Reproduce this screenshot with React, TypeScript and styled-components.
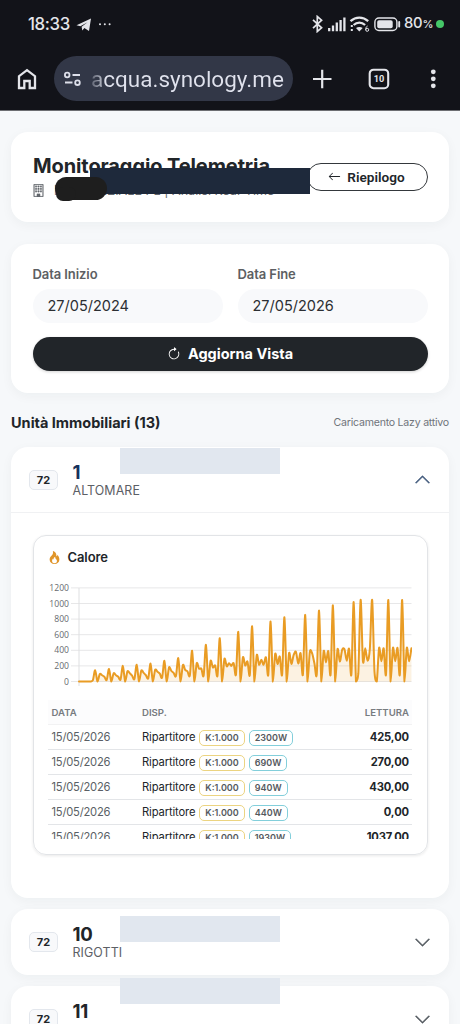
import React from 'react';
import styled, { createGlobalStyle } from 'styled-components';
import { BsArrowLeft, BsArrowClockwise, BsBuilding, BsChevronDown, BsChevronUp, BsFire } from 'react-icons/bs';

const GlobalStyle = createGlobalStyle`
  * { box-sizing: border-box; }
  body {
    margin: 0;
    background: #f6f8fa;
    color: #212529;
    font-family: Inter, "Liberation Sans", sans-serif;
  }
`;

const Screen = styled.div`
  width: 460px;
  height: 1024px;
  overflow: hidden;
`;

const PhoneHeader = styled.header`
  height: 111px;
  background: #121319;
  border-bottom: 1px solid #6d6e72;
  color: #e4e5ea;
`;

const StatusBar = styled.div`
  height: 47px;
  padding: 0 16px 0 28px;
  display: flex;
  align-items: center;
`;

const Clock = styled.span`
  width: 43px;
  font: 500 16.8px/20px Inter, sans-serif;
  letter-spacing: -0.35px;
  white-space: nowrap;
`;

const StatusIcons = styled.div`
  margin-left: auto;
  display: flex;
  align-items: center;
`;

const BatteryText = styled.span`
  width: 32px;
  margin-left: 3px;
  font: 500 14.8px/18px Inter, sans-serif;
  letter-spacing: -0.2px;
  white-space: nowrap;
  small { font-size: 11px; }
`;

const ActiveDot = styled.span`
  width: 8px;
  height: 8px;
  border-radius: 50%;
  background: #45c768;
`;

const BrowserBar = styled.div`
  height: 63px;
  padding: 9px 0 0 16px;
  display: flex;
  align-items: flex-start;
  svg { flex: none; }
`;

const IconSlot = styled.div<{ $width: number }>`
  width: ${p => p.$width}px;
  height: 45px;
  display: flex;
  align-items: center;
`;

const AddressPill = styled.div`
  width: 239px;
  height: 45px;
  padding-left: 9px;
  border-radius: 23px;
  background: #323747;
  display: flex;
  align-items: center;
`;

const Address = styled.span`
  margin-left: 9px;
  font: 400 22.5px/28px Roboto, sans-serif;
  white-space: nowrap;
  background: linear-gradient(90deg, #5d6170 0, #a0a4b1 9px, #e0e2ed 14px);
  background-clip: text;
  color: transparent;
`;

const Main = styled.main`
  padding: 21px 11px 0;
`;

const Card = styled.section<{ $height: number; $gap: number }>`
  height: ${p => p.$height}px;
  margin-bottom: ${p => p.$gap}px;
  border-radius: 17px;
  background: #fff;
  box-shadow: 0 3px 12px rgba(30, 35, 42, 0.045);
`;

const TitleCard = styled(Card)`
  position: relative;
  padding: 22px 22px 0;
  display: flex;
  justify-content: space-between;
`;

const Title = styled.h1`
  margin: 0;
  font-size: 20px;
  line-height: 24px;
  font-weight: 700;
  letter-spacing: -0.1px;
  white-space: nowrap;
`;

const Subtitle = styled.div`
  margin-top: 4px;
  display: flex;
  align-items: center;
  gap: 9px;
  color: #63686e;
  font-size: 12.6px;
  line-height: 17px;
  white-space: nowrap;
  svg { margin: -1px 0 0 -1px; stroke: currentColor; stroke-width: 0.3; }
`;

const BackButton = styled.button`
  position: absolute;
  right: 21px;
  top: 31px;
  width: 121px;
  height: 28px;
  padding: 0 2px 1px 0;
  border: 1px solid #34383c;
  border-radius: 14px;
  background: #fff;
  color: #212529;
  display: flex;
  align-items: center;
  justify-content: center;
  gap: 6px;
  font: 600 13.6px/16px Roboto, sans-serif;
`;

const TitleMask = styled.span`
  position: absolute;
  left: 79px;
  top: 36px;
  width: 220px;
  height: 26px;
  background: #1e293b;
`;

const InkMask = styled.span`
  position: absolute;
  left: 44px;
  top: 45px;
  width: 52px;
  height: 23px;
  border-radius: 12px;
  background: #1e1e1e;
  &::after {
    content: "";
    position: absolute;
    left: 1px;
    top: 10px;
    width: 20px;
    height: 14px;
    border-radius: 9px;
    background: inherit;
  }
`;

const FilterCard = styled(Card)`
  padding: 22px 21.5px 0;
`;

const DateGrid = styled.div`
  display: grid;
  grid-template-columns: 1fr 1fr;
  gap: 15px;
`;

const FieldLabel = styled.div`
  height: 23px;
  color: #5d5f63;
  font: 600 13px/17px Inter, sans-serif;
  letter-spacing: -0.08px;
`;

const DateField = styled.div`
  height: 34px;
  padding-left: 15px;
  border-radius: 17px;
  background: #f8f9fb;
  color: #2c2f33;
  font-size: 14.5px;
  line-height: 33px;
`;

const RefreshButton = styled.button`
  width: 100%;
  height: 34px;
  margin-top: 14px;
  padding: 0;
  border: 0;
  border-radius: 17px;
  background: #212529;
  box-shadow: 0 1px 3px rgba(0, 0, 0, 0.18);
  color: #fff;
  display: flex;
  align-items: center;
  justify-content: center;
  gap: 7px;
  font: 700 14.5px/20px Inter, sans-serif;
`;

const SectionHead = styled.div`
  height: 20px;
  margin-bottom: 15px;
  display: flex;
  align-items: center;
  justify-content: space-between;
`;

const SectionTitle = styled.h2`
  margin: 0;
  font-size: 14.5px;
  font-weight: 700;
`;

const SectionNote = styled.span`
  margin-top: 1px;
  color: #70747a;
  font-size: 10.6px;
  letter-spacing: -0.24px;
`;

const UnitHeader = styled.div<{ $open?: boolean }>`
  position: relative;
  height: 66px;
  padding: 0 18px;
  border-bottom: ${p => (p.$open ? '1px solid #f0f1f3' : '0')};
  display: flex;
  align-items: center;
  color: ${p => (p.$open ? '#16325c' : '#212529')};
  > svg {
    margin-left: auto;
    color: ${p => (p.$open ? '#40587b' : '#50565c')};
    stroke: currentColor;
    stroke-width: 0.5;
  }
`;

const CodeBadge = styled.span`
  width: 29px;
  height: 20px;
  margin-right: 14.5px;
  border: 1px solid #e3e7ed;
  border-radius: 5px;
  background: #f8f9fb;
  color: #212529;
  font: 700 11px/18px Inter, sans-serif;
  text-align: center;
`;

const UnitText = styled.div`
  padding-top: 1px;
`;

const UnitNumber = styled.div`
  font-size: 18.6px;
  line-height: 21px;
  font-weight: 700;
  letter-spacing: -0.2px;
`;

const UnitOwner = styled.div`
  min-height: 16px;
  color: #5c6065;
  font-size: 12.4px;
  line-height: 16px;
  letter-spacing: 0.1px;
`;

const NameMask = styled.span<{ $top: number }>`
  position: absolute;
  left: 109px;
  top: ${p => p.$top}px;
  width: 160px;
  height: 26px;
  background: #e1e7ef;
`;

const MeterCard = styled.div`
  height: 320px;
  margin: 22px 21px 0 21.5px;
  padding: 13px 15px 0 14px;
  border: 1px solid #e2e4e7;
  border-radius: 13px;
  box-shadow: 0 1px 3px rgba(0, 0, 0, 0.09);
`;

const MeterTitle = styled.div`
  height: 16px;
  display: flex;
  align-items: center;
  gap: 7px;
  font-size: 13px;
  font-weight: 600;
  letter-spacing: -0.1px;
  svg { color: #e0952a; }
`;

const Chart = styled.svg`
  display: block;
  width: 365px;
  height: 120px;
  margin: 15px 0 0 -0.4px;
`;

const TableView = styled.div`
  height: 139px;
  overflow: hidden;
`;

const TableRow = styled.div<{ $head?: boolean }>`
  height: 25px;
  padding: 0 3px 0 4px;
  border-bottom: 1px solid ${p => (p.$head ? '#f2f2f3' : '#e3e5e8')};
  background: ${p => (p.$head ? '#fcfcfd' : '#fff')};
  color: ${p => (p.$head ? '#777b80' : '#212529')};
  display: grid;
  grid-template-columns: 90.5px 1fr auto;
  align-items: center;
  font-size: ${p => (p.$head ? '9.6px' : '11.2px')};
  font-weight: ${p => (p.$head ? 600 : 400)};
`;

const ReadDate = styled.span`
  color: #5a5f65;
  font-size: 11.2px;
  letter-spacing: -0.22px;
`;

const Device = styled.span`
  height: 24px;
  display: flex;
  align-items: center;
  gap: 4px;
  letter-spacing: -0.13px;
`;

const Tag = styled.span<{ $tone: string }>`
  height: 16px;
  margin-top: 1px;
  padding: 0 5px;
  border: 1px solid ${p => p.$tone};
  border-radius: 5px;
  color: #55595e;
  font: 600 9px/14px Inter, sans-serif;
  letter-spacing: 0;
`;

const Reading = styled.b`
  font-weight: 700;
  letter-spacing: -0.12px;
`;

const readings = [
  0, 0, 0, 0, 0, 0, 15, 145, 0, 95, 80, 60, 20, 160, 0, 105, 80, 60, 25, 200, 0, 130, 105, 75, 30, 215, 0,
  140, 110, 80, 40, 230, 0, 150, 125, 100, 50, 265, 0, 180, 135, 110, 70, 300, 0, 210, 150, 130, 75, 395, 0,
  235, 165, 165, 75, 470, 0, 265, 180, 205, 75, 555, 0, 290, 195, 235, 200, 235, 90, 636, 0, 310, 205, 255, 85,
  709, 0, 340, 215, 280, 215, 310, 85, 769, 0, 355, 225, 320, 90, 824, 0, 365, 225, 340, 380, 230, 365, 90, 854,
  0, 380, 360, 230, 90, 910, 0, 390, 245, 390, 90, 978, 0, 415, 255, 405, 415, 265, 420, 90, 1020, 0, 100, 1046,
  260, 425, 265, 420, 1046, 130, 0, 430, 260, 425, 90, 1046, 0, 430, 260, 430, 90, 1046, 0, 430, 260, 425,
];

const plotLeft = 32;
const plotWidth = 332.4;
const baseline = 101.5;
const plotY = (v: number) => baseline - v * 0.078;

/** Cubic path through the readings, with control points shortened for a mild curve. */
function smoothPath(values: number[]) {
  const pts = values.map((v, i) => [plotLeft + (i * plotWidth) / (values.length - 1), plotY(v)]);
  const clamp = (y: number) => Math.min(baseline, y);
  const k = 0.15;
  let d = `M${pts[0][0]} ${pts[0][1]}`;
  for (let i = 0; i < pts.length - 1; i++) {
    const a = pts[Math.max(0, i - 1)];
    const b = pts[i];
    const c = pts[i + 1];
    const e = pts[Math.min(pts.length - 1, i + 2)];
    d += `C${b[0] + (c[0] - a[0]) * k} ${clamp(b[1] + (c[1] - a[1]) * k)} ${c[0] - (e[0] - b[0]) * k} ${clamp(c[1] - (e[1] - b[1]) * k)} ${c[0]} ${c[1]}`;
  }
  return d;
}

function HeatChart() {
  const line = smoothPath(readings);
  return (
    <Chart viewBox="0 0 365 120">
      {[0, 200, 400, 600, 800, 1000, 1200].map(v => (
        <g key={v}>
          <path d={`M24 ${plotY(v)}H364.5`} stroke="#e7e7e8" />
          <text x="22" y={plotY(v) + 3} textAnchor="end" fontFamily="Open Sans, sans-serif" fontSize="8.6" fill="#686b70">{v}</text>
        </g>
      ))}
      <path d={`M${plotLeft} 8V106`} stroke="#dedfe1" />
      <path d={`${line}L${plotLeft + plotWidth} ${baseline}H${plotLeft}Z`} fill="#e99b20" opacity="0.13" />
      <path d={line} fill="none" stroke="#e99c24" strokeWidth="2" strokeLinejoin="round" strokeLinecap="round" />
    </Chart>
  );
}

const rows = [
  ['2300W', '425,00'],
  ['690W', '270,00'],
  ['940W', '430,00'],
  ['440W', '0,00'],
  ['1930W', '1037,00'],
];

function Unit({ number, owner, maskTop, open }: { number: string; owner: string; maskTop: number; open?: boolean }) {
  return (
    <UnitHeader $open={open}>
      <CodeBadge>72</CodeBadge>
      <UnitText>
        <UnitNumber>{number}</UnitNumber>
        <UnitOwner>{owner}</UnitOwner>
      </UnitText>
      {open ? <BsChevronUp size={17} /> : <BsChevronDown size={17} />}
      <NameMask $top={maskTop} />
    </UnitHeader>
  );
}

function SystemIcons() {
  return (
    <svg width="90" height="18" viewBox="0 0 90 18" fill="none" stroke="#e4e5ea">
      <path d="M2 4.8l8.6 8-4.3 3.7V1.5l4.3 3.7-8.6 8" strokeWidth="1.7" />
      <path d="M18.2 13v3.3M22 10.5v5.8M25.8 7.5v8.8M29.6 5v11.3M33.4 2.5v13.8" strokeWidth="2.3" />
      <path d="M39.5 6.2c5.2-4.7 12.5-4.7 17.7 0M42.6 10c3.4-3 8.1-3 11.5 0" strokeWidth="2.3" />
      <path d="M45 13.1c2-1.6 4.7-1.6 6.7 0L48.3 16.5z" fill="#e4e5ea" stroke="none" />
      <path d="M40.8 10v2m0 2v2" strokeWidth="2" />
      <circle cx="56.2" cy="14.8" r="1.5" strokeWidth="1" />
      <path d="M54.7 14.8c0-2 .6-3.2 1.8-3.8" strokeWidth="1" />
      <rect x="63.9" y="3" width="22" height="12.5" rx="4" strokeWidth="1.4" />
      <rect x="66.2" y="5.3" width="15.5" height="8" rx="1.8" fill="#e4e5ea" stroke="none" />
      <path d="M88.2 7v4.5" strokeWidth="1.9" strokeLinecap="round" />
    </svg>
  );
}

export default function App() {
  return (
    <Screen>
      <GlobalStyle />
      <PhoneHeader>
        <StatusBar>
          <Clock>18:33</Clock>
          <svg width="42" height="18" viewBox="0 0 42 18" fill="#e4e5ea">
            <path d="M5.5 10.3L20 3.5 18 16 13.4 13 11.3 15.4 10.6 11.8 16.5 7.2 9.4 11.3z" />
            <circle cx="29" cy="9.3" r="1" /><circle cx="33.8" cy="9.3" r="1" /><circle cx="38.6" cy="9.3" r="1" />
          </svg>
          <StatusIcons>
            <SystemIcons />
            <BatteryText>80<small>%</small></BatteryText>
            <ActiveDot />
          </StatusIcons>
        </StatusBar>
        <BrowserBar>
          <IconSlot $width={38}>
            <svg width="22" height="24" viewBox="0 0 22 24" fill="none" stroke="#e4e5ea" strokeWidth="2.3">
              <path d="M3 21V9.2L11 3.2 19 9.2V21H13.7V14H8.3V21Z" />
            </svg>
          </IconSlot>
          <AddressPill>
            <svg width="19" height="18" viewBox="0 0 19 18" fill="none" stroke="#dddfea" strokeWidth="1.8">
              <circle cx="4.2" cy="5" r="2.3" /><path d="M9.5 5H17M2 12.5H9.5" /><circle cx="14.5" cy="12.7" r="2.3" />
            </svg>
            <Address>acqua.synology.me</Address>
          </AddressPill>
          <IconSlot $width={75}>
            <svg width="75" height="24" viewBox="0 0 75 24" fill="none" stroke="#e4e5ea" strokeWidth="2.2"><path d="M20 12H38.5M29.2 2.8V21.3" /></svg>
          </IconSlot>
          <IconSlot $width={56}>
            <svg width="22" height="24" viewBox="0 0 22 24">
              <rect x="1.7" y="2.7" width="18.5" height="18.5" rx="3.8" fill="none" stroke="#e4e5ea" strokeWidth="2.1" />
              <text x="10.9" y="15.2" textAnchor="middle" fontFamily="Roboto, sans-serif" fontWeight="700" fontSize="9.2" fill="#e4e5ea">10</text>
            </svg>
          </IconSlot>
          <IconSlot $width={20}>
            <svg width="20" height="24" viewBox="0 0 20 24" fill="#e4e5ea"><circle cx="9.3" cy="4.8" r="2.4" /><circle cx="9.3" cy="11.8" r="2.4" /><circle cx="9.3" cy="18.8" r="2.4" /></svg>
          </IconSlot>
        </BrowserBar>
      </PhoneHeader>

      <Main>
        <TitleCard $height={90} $gap={22}>
          <div>
            <Title>Monitoraggio Telemetria</Title>
            <Subtitle><BsBuilding size={13} /><span>RESIDENZIALE PL | Analisi Real-Time</span></Subtitle>
          </div>
          <BackButton><BsArrowLeft size={13} />Riepilogo</BackButton>
          <TitleMask />
          <InkMask />
        </TitleCard>

        <FilterCard $height={149} $gap={19}>
          <DateGrid>
            <div><FieldLabel>Data Inizio</FieldLabel><DateField>27/05/2024</DateField></div>
            <div><FieldLabel>Data Fine</FieldLabel><DateField>27/05/2026</DateField></div>
          </DateGrid>
          <RefreshButton><BsArrowClockwise size={14} />Aggiorna Vista</RefreshButton>
        </FilterCard>

        <SectionHead>
          <SectionTitle>Unità Immobiliari (13)</SectionTitle>
          <SectionNote>Caricamento Lazy attivo</SectionNote>
        </SectionHead>

        <Card $height={451} $gap={11}>
          <Unit number="1" owner="ALTOMARE" maskTop={1} open />
          <MeterCard>
            <MeterTitle><BsFire size={13} />Calore</MeterTitle>
            <HeatChart />
            <TableView>
              <TableRow $head><span>DATA</span><span>DISP.</span><span>LETTURA</span></TableRow>
              {rows.map(([power, value]) => (
                <TableRow key={power}>
                  <ReadDate>15/05/2026</ReadDate>
                  <Device>Ripartitore <Tag $tone="#ecd481">K:1.000</Tag><Tag $tone="#83cfdb">{power}</Tag></Device>
                  <Reading>{value}</Reading>
                </TableRow>
              ))}
            </TableView>
          </MeterCard>
        </Card>
        <Card $height={66} $gap={11}><Unit number="10" owner="RIGOTTI" maskTop={7} /></Card>
        <Card $height={66} $gap={11}><Unit number="11" owner="" maskTop={-8} /></Card>
      </Main>
    </Screen>
  );
}
